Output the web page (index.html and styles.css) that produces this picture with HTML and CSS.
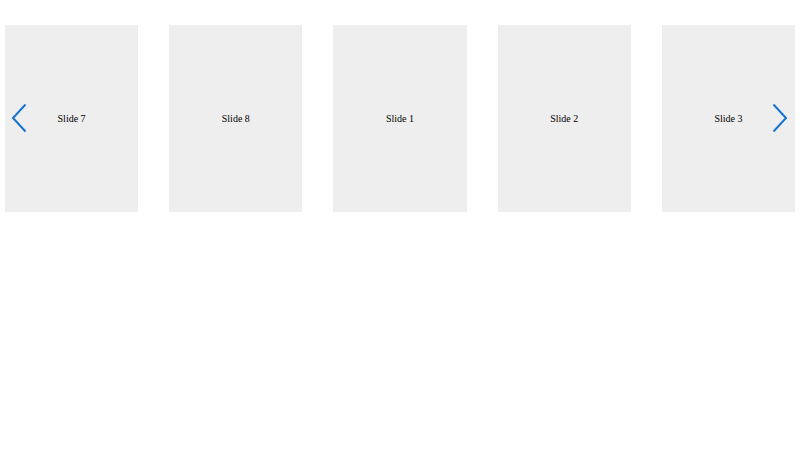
FILE: index.html
```html
<!DOCTYPE html>
<html>
<head>
<meta charset="utf-8">
<link rel="stylesheet" href="styles.css">
</head>
<body>
<div class="swiper">
  <div class="track">
    <div class="slide">Slide 7</div>
    <div class="slide">Slide 8</div>
    <div class="slide">Slide 1</div>
    <div class="slide">Slide 2</div>
    <div class="slide">Slide 3</div>
  </div>
  <div class="nav prev"><svg width="16" height="30" viewBox="0 0 16 30"><path d="M14.5 1.5 L2 15 L14.5 28.5" fill="none" stroke="#1673d4" stroke-width="2"/></svg></div>
  <div class="nav next"><svg width="16" height="30" viewBox="0 0 16 30"><path d="M1.5 1.5 L14 15 L1.5 28.5" fill="none" stroke="#1673d4" stroke-width="2"/></svg></div>
</div>
</body>
</html>
```
FILE: styles.css
```css
html, body { margin: 0; padding: 0; background: #fff; }
body { width: 800px; height: 450px; font-family: "Liberation Serif", serif; }
.swiper { position: relative; padding: 25px 5px 0 5px; }
.track { display: flex; gap: 31px; }
.slide {
  flex: 1;
  height: 187px;
  background: #eeeeee;
  display: flex;
  align-items: center;
  justify-content: center;
  font-size: 10px;
  color: #000;
}
.nav { position: absolute; top: 103px; line-height: 0; }
.prev { left: 11px; }
.next { left: 772px; }
```
